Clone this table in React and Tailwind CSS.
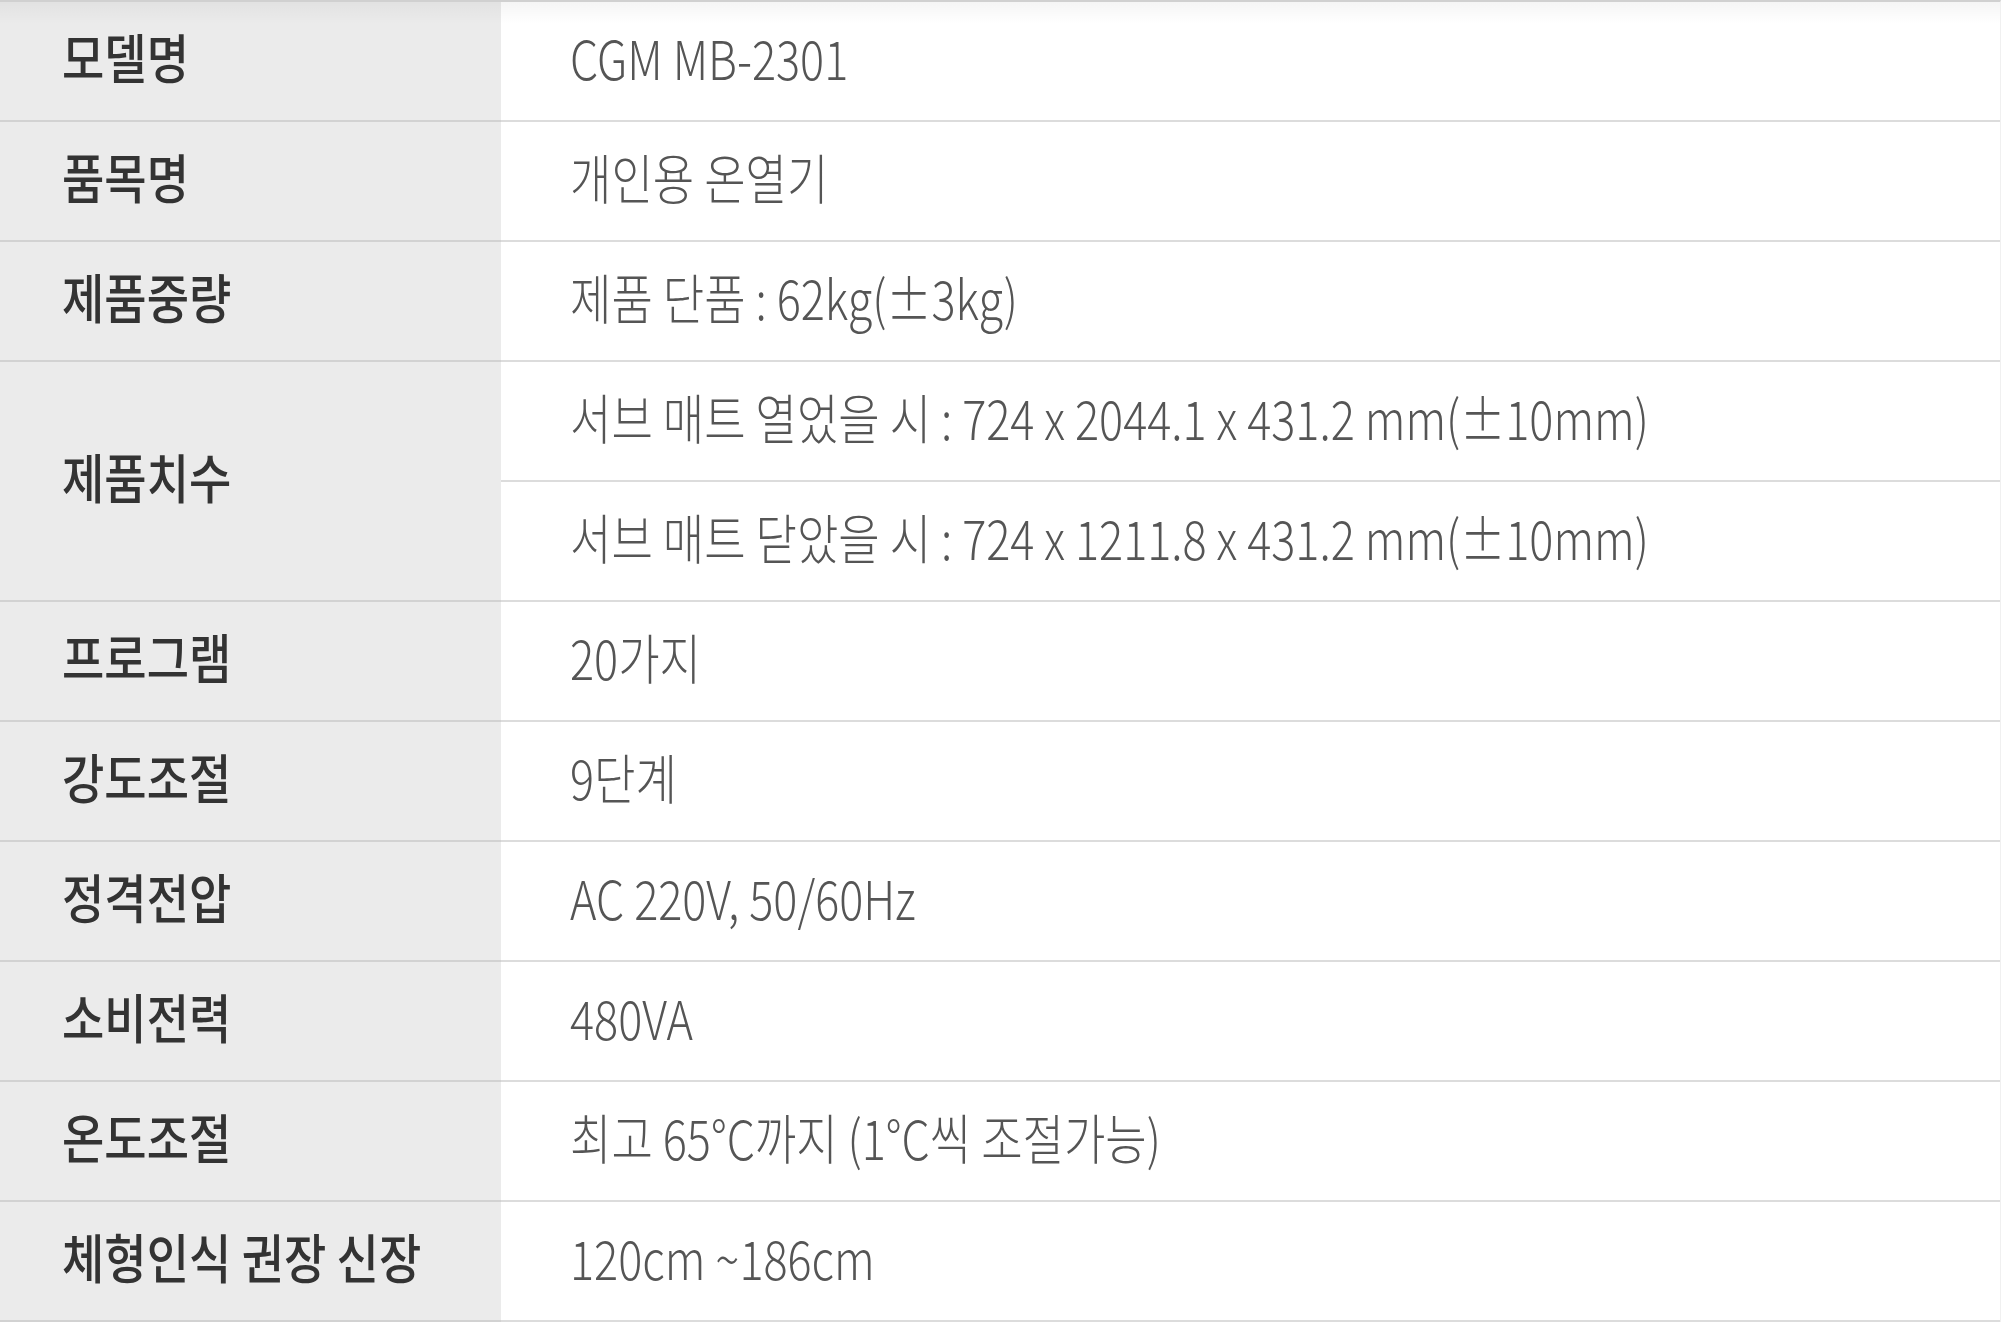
import React from "react";

const font = { fontFamily: '"Noto Sans CJK KR", "Noto Sans", sans-serif' };

const rows = [
  { label: "모델명", values: ["CGM MB-2301"] },
  { label: "품목명", values: ["개인용 온열기"] },
  { label: "제품중량", values: ["제품 단품 : 62kg(±3kg)"] },
  {
    label: "제품치수",
    values: [
      "서브 매트 열었을 시 : 724 x 2044.1 x 431.2 mm(±10mm)",
      "서브 매트 닫았을 시 : 724 x 1211.8 x 431.2 mm(±10mm)",
    ],
  },
  { label: "프로그램", values: ["20가지"] },
  { label: "강도조절", values: ["9단계"] },
  { label: "정격전압", values: ["AC 220V, 50/60Hz"] },
  { label: "소비전력", values: ["480VA"] },
  { label: "온도조절", values: ["최고 65°C까지 (1°C씩 조절가능)"] },
  { label: "체형인식 권장 신장", values: ["120cm ~186cm"] },
];

export default function App() {
  return (
    <div className="w-[2004px] h-[1322px] bg-white overflow-hidden" style={font}>
      <div className="w-[2001px] border-t-2 border-[#d0d0d0] border-r border-r-[#f0f0f0] relative">
        <div className="absolute left-0 right-0 top-0 h-[22px] bg-gradient-to-b from-black/[0.04] to-transparent pointer-events-none" />
        {rows.map((r, i) => (
          <div key={i} className="flex">
            <div className="w-[501px] shrink-0 bg-[#ebebeb] border-b-2 border-[#d2d2d2] flex items-center pl-[62px]">
              <span className="inline-block scale-y-115 -translate-y-[5px] text-[46px] leading-none font-medium text-[#333]">
                {r.label}
              </span>
            </div>
            <div className="flex-1 flex flex-col">
              {r.values.map((v, j) => (
                <div
                  key={j}
                  className="h-[120px] border-b-2 border-[#dcdcdc] flex items-center pl-[69px]"
                >
                  <span className="inline-block scale-y-120 -translate-y-[5px] text-[45px] leading-none font-light text-[#555]">
                    {v}
                  </span>
                </div>
              ))}
            </div>
          </div>
        ))}
      </div>
    </div>
  );
}
